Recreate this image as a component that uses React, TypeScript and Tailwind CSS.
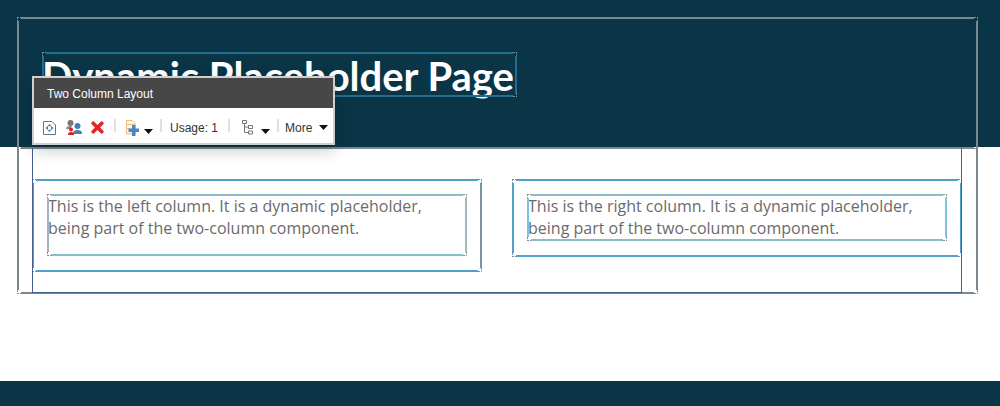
import React from 'react';

type Tone = 'page' | 'column' | 'text' | 'title';

const EDGE_X: Record<Tone, string> = {
  page: 'bg-[repeating-linear-gradient(90deg,#4f94b4_0_1px,#7d8a92_1px_2px)]',
  column: 'bg-[repeating-linear-gradient(90deg,#4a9cc4_0_1px,#7d9aa8_1px_2px)]',
  text: 'bg-[repeating-linear-gradient(90deg,#74bcd8_0_1px,#8fc0d2_1px_2px)]',
  title: 'bg-[repeating-linear-gradient(90deg,#26708f_0_1px,#40606e_1px_2px)]',
};

const EDGE_Y: Record<Tone, string> = {
  page: 'bg-[repeating-linear-gradient(0deg,#4f94b4_0_1px,#7d8a92_1px_2px)]',
  column: 'bg-[repeating-linear-gradient(0deg,#4a9cc4_0_1px,#7d9aa8_1px_2px)]',
  text: 'bg-[repeating-linear-gradient(0deg,#74bcd8_0_1px,#a8bcc6_1px_2px)]',
  title: 'bg-[repeating-linear-gradient(0deg,#26708f_0_1px,#40606e_1px_2px)]',
};

const Corner = ({ className }: { className: string }) => (
  <span className={`absolute w-1 h-1 border-[#8a8a8a] border-dotted ${className}`} />
);

// the dithered edit-mode outline drawn over a rendering
const Chrome = ({ tone, className = '' }: { tone: Tone; className?: string }) => (
  <div className={`absolute pointer-events-none ${className}`}>
    <div className={`absolute left-1 right-1 top-0 h-0.5 ${EDGE_X[tone]}`} />
    <div className={`absolute left-1 right-1 bottom-0 h-0.5 ${EDGE_X[tone]}`} />
    <div className={`absolute top-1 bottom-1 left-0 w-0.5 ${EDGE_Y[tone]}`} />
    <div className={`absolute top-1 bottom-1 right-0 w-0.5 ${EDGE_Y[tone]}`} />
    <Corner className="top-0 left-0 border-t border-l" />
    <Corner className="top-0 right-0 border-t border-r" />
    <Corner className="bottom-0 left-0 border-b border-l" />
    <Corner className="bottom-0 right-0 border-b border-r" />
  </div>
);

const Divider = ({ className }: { className: string }) => (
  <span className={`block w-0.5 h-[13px] bg-[#dfdfe4] shrink-0 -mt-1 ${className}`} />
);

const Caret = ({ className }: { className: string }) => (
  <svg width="9" height="5" viewBox="0 0 9 5" className={`shrink-0 ${className}`}>
    <path d="M0 0h9L4.5 5z" fill="#111" />
  </svg>
);

const PageIcon = () => (
  <svg width="13" height="16" viewBox="0 0 13 16" fill="none" className="shrink-0">
    <path d="M.5 1.500h8.500l3.500 3.500v9.500H.5z" stroke="#707070" />
    <path d="M2.500 8 5 5.800v4.400zM10.500 8 8 5.800v4.400zM6.500 4 8.700 6.300H4.300zM6.500 12 8.700 9.700H4.300z" fill="#4a86b8" />
  </svg>
);

const UsersIcon = () => (
  <svg width="16" height="15" viewBox="0 0 16 15" className="ml-2.5 shrink-0">
    <circle cx="4.5" cy="3" r="3" fill="#777" />
    <path d="M0 9c0-2 2-3 3-3h3L4 9z" fill="#888" />
    <circle cx="11.5" cy="6" r="3" fill="#4a7fb5" />
    <path d="M7 14v-1c0-2 2-3 4.500-3S16 11 16 13v1z" fill="#4a7fb5" />
    <circle cx="5" cy="9.500" r="2" fill="#e02020" />
    <path d="M2 15v-1c0-1 1-2 3-2s3 1 3 2v1z" fill="#e02020" />
  </svg>
);

const DeleteIcon = () => (
  <svg width="13" height="13" viewBox="0 0 13 13" className="ml-[9px] shrink-0">
    <path d="M2.200 2.200 10.800 10.800M10.800 2.200 2.200 10.800" stroke="#e0262a" strokeWidth="3.600" strokeLinecap="round" />
  </svg>
);

const InsertIcon = () => (
  <svg width="15" height="16" viewBox="0 0 15 16" fill="none" className="ml-2.5 shrink-0">
    <path d="M.5.500h6l2.500 2.500v11H.5z" fill="#fdf6e4" stroke="#e6c27e" />
    <path d="M.5 4.500h8M.5 8.500h4" stroke="#e6c27e" />
    <path d="M6 5h3.500v3.500H13V12H9.500v4H6v-4H2.500V8.500H6z" fill="#4a86c0" />
  </svg>
);

const TreeIcon = () => (
  <svg width="11" height="15" viewBox="0 0 11 15" fill="none" stroke="#777" className="ml-3 shrink-0">
    <path d="M.5.500h4v3h-4zM6.500 5.500h4v3h-4zM6.500 11h4v3h-4zM2.500 3.500v9h4M2.500 7h4" />
  </svg>
);

const Toolbar = () => (
  <div className="absolute left-8 top-[76px] w-[303px] h-[69px] border-2 border-[#cfcfcf] bg-white shadow-[0_6px_14px_rgba(0,0,0,0.2)] font-['Liberation_Sans',sans-serif] text-xs">
    <div className="h-[30px] bg-[#474747] text-white flex items-center pl-[13px] pt-0.5">Two Column Layout</div>
    <div className="h-[35px] flex items-center pl-[9px] pt-1 text-[#333]">
      <PageIcon />
      <UsersIcon />
      <DeleteIcon />
      <Divider className="ml-2.5" />
      <InsertIcon />
      <Caret className="ml-[3px] mt-2" />
      <Divider className="ml-[7px]" />
      <span className="ml-2 w-[48px] whitespace-nowrap">Usage: 1</span>
      <Divider className="ml-2.5" />
      <TreeIcon />
      <Caret className="ml-2 mt-2" />
      <Divider className="ml-[7px]" />
      <span className="ml-1.5">More</span>
      <Caret className="ml-[7px]" />
    </div>
  </div>
);

const Column = ({ minH, children }: { minH: string; children: React.ReactNode }) => (
  <div className={`relative w-[450px] ${minH} p-4`}>
    <Chrome tone="column" className="inset-0" />
    <div className="relative">
      <Chrome tone="text" className="-inset-x-px -inset-y-px" />
      {children}
    </div>
  </div>
);

export default function App() {
  return (
    <div className="relative h-[406px] overflow-hidden bg-white font-['Open_Sans',sans-serif]">
      <header className="h-[147px] bg-[#0a3547] pt-[53px] pl-[42px]">
        <h1 className="relative w-[474px] h-[43px] text-white text-[40px] leading-[47px] font-bold font-['Lato',sans-serif] whitespace-nowrap">
          <Chrome tone="title" className="-top-px -bottom-px left-0 -right-px" />
          Dynamic Placeholder Page
        </h1>
      </header>

      <main className="h-[234px] pt-[32px] px-[32px]">
        <div className="flex gap-[30px] items-start text-base leading-[22px] text-[#6b6b6b]">
          <Column minH="h-[93px]">
            <p className="h-[60px] w-[418px]">This is the left column. It is a dynamic placeholder, being part of the two-column component.</p>
          </Column>
          <Column minH="h-[78px]">
            <p className="h-[45px] w-[418px]">This is the right column. It is a dynamic placeholder, being part of the two-column component.</p>
          </Column>
        </div>
      </main>

      <footer className="h-[25px] bg-[#0a3547]" />

      {/* page level outlines */}
      <Chrome tone="page" className="left-[17px] top-[17px] w-[961px] h-[132px]" />
      <Chrome tone="page" className="left-[17px] top-[17px] w-[961px] h-[277px]" />
      <div className="absolute left-8 top-[148px] w-[930px] h-[145px] border-x border-b border-[#44608f]" />
      <Toolbar />
    </div>
  );
}
